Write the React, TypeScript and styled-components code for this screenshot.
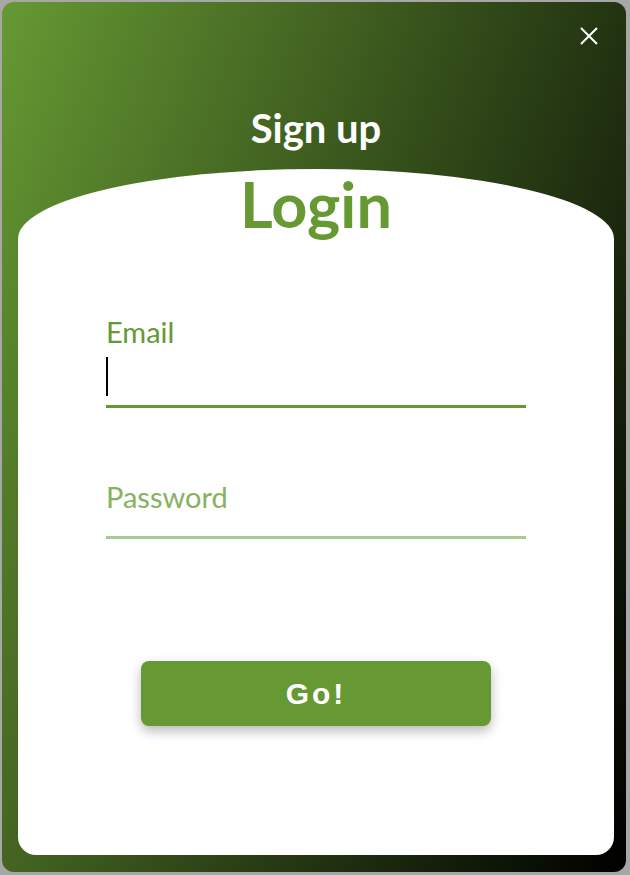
import React from "react";
import styled, { createGlobalStyle } from "styled-components";

const GlobalStyle = createGlobalStyle`
  html, body {
    margin: 0;
    padding: 0;
  }
  body {
    background: #a7a7a7;
    font-family: Lato, "Open Sans", sans-serif;
  }
  * { box-sizing: border-box; }
`;

const Page = styled.div`
  width: 630px;
  height: 875px;
  padding: 2px 4px 3px 2px;
`;

const Modal = styled.div`
  position: relative;
  width: 624px;
  height: 870px;
  border-radius: 12px;
  background: linear-gradient(110deg, #669933 0%, #000000 100%);
  display: flex;
  flex-direction: column;
  padding: 0 12px 17px 16px;
  overflow: hidden;
`;

const CloseButton = styled.button`
  position: absolute;
  top: 25px;
  right: 28px;
  width: 18px;
  height: 18px;
  padding: 0;
  border: none;
  background: transparent;
  cursor: pointer;
  display: flex;
`;

const SignUp = styled.h2`
  margin: 0;
  height: 167px;
  padding-top: 106px;
  text-align: center;
  color: #ffffff;
  font-family: Lato, sans-serif;
  font-weight: 700;
  font-size: 40px;
  line-height: 40px;
`;

const Card = styled.div`
  flex: 1;
  background: #ffffff;
  border-radius: 50% 50% 18px 18px / 70px 70px 18px 18px;
  display: flex;
  flex-direction: column;
  align-items: center;
`;

const Title = styled.h1`
  margin: 5px 0 0;
  color: #669933;
  font-family: Lato, sans-serif;
  font-weight: 700;
  font-size: 63px;
  line-height: 60px;
`;

const Form = styled.form`
  width: 420px;
  margin-top: 80px;
  display: flex;
  flex-direction: column;
`;

const Field = styled.div<{ $gap?: number }>`
  display: flex;
  flex-direction: column;
  padding-top: ${(p) => p.$gap ?? 0}px;
`;

const Label = styled.label`
  color: #669933;
  font-family: Lato, sans-serif;
  font-size: 29px;
  line-height: 36px;
`;

const InputLine = styled.div<{ $active?: boolean }>`
  display: flex;
  align-items: flex-start;
  padding: ${(p) => (p.$active ? "7px 0 9px" : "0 0 21px")};
  border-bottom: 3px solid ${(p) => (p.$active ? "#669933" : "#a9cb8d")};
`;

const Caret = styled.span`
  display: block;
  width: 2px;
  height: 39px;
  background: #000000;
`;

const Placeholder = styled.span`
  color: #86b261;
  font-family: Lato, sans-serif;
  font-size: 29px;
  line-height: 36px;
`;

const GoButton = styled.button`
  width: 350px;
  height: 65px;
  margin-top: 122px;
  border: none;
  border-radius: 8px;
  background: #669933;
  box-shadow: 0 5px 12px rgba(0, 0, 0, 0.28);
  color: #ffffff;
  font-family: "Liberation Sans", Arial, sans-serif;
  font-weight: 700;
  font-size: 30px;
  letter-spacing: 3px;
  cursor: pointer;
`;

export default function App() {
  return (
    <>
      <GlobalStyle />
      <Page>
        <Modal>
          <CloseButton aria-label="Close">
            <svg width="18" height="18" viewBox="0 0 18 18">
              <path d="M1 1 L17 17 M17 1 L1 17" stroke="#ffffff" strokeWidth="2" />
            </svg>
          </CloseButton>
          <SignUp>Sign up</SignUp>
          <Card>
            <Title>Login</Title>
            <Form>
              <Field>
                <Label>Email</Label>
                <InputLine $active>
                  <Caret />
                </InputLine>
              </Field>
              <Field $gap={71}>
                <InputLine>
                  <Placeholder>Password</Placeholder>
                </InputLine>
              </Field>
            </Form>
            <GoButton type="button">Go!</GoButton>
          </Card>
        </Modal>
      </Page>
    </>
  );
}
